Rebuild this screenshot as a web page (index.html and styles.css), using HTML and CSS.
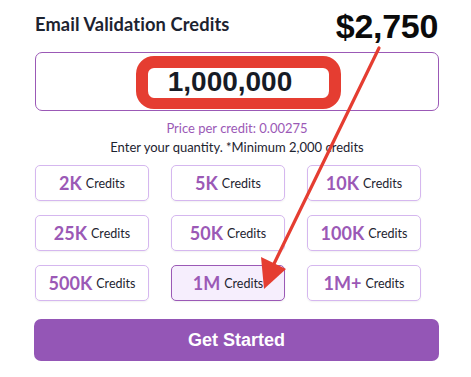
FILE: index.html
```html
<!DOCTYPE html>
<html>
<head>
<meta charset="utf-8">
<link rel="stylesheet" href="styles.css">
</head>
<body>
<div class="page">
  <div class="card">
    <div class="header">
      <h2 class="title">Email Validation Credits</h2>
      <div class="total">$2,750</div>
    </div>
    <div class="qty-box">
      <div class="qty-value">1,000,000</div>
      <div class="qty-highlight"></div>
    </div>
    <p class="ppc">Price per credit: 0.00275</p>
    <p class="hint">Enter your quantity. *Minimum 2,000 credits</p>
    <div class="grid">
      <div class="opt"><span class="amt">2K</span><span class="lbl">Credits</span></div>
      <div class="opt"><span class="amt">5K</span><span class="lbl">Credits</span></div>
      <div class="opt"><span class="amt">10K</span><span class="lbl">Credits</span></div>
      <div class="opt"><span class="amt">25K</span><span class="lbl">Credits</span></div>
      <div class="opt"><span class="amt">50K</span><span class="lbl">Credits</span></div>
      <div class="opt"><span class="amt">100K</span><span class="lbl">Credits</span></div>
      <div class="opt"><span class="amt">500K</span><span class="lbl">Credits</span></div>
      <div class="opt selected"><span class="amt">1M</span><span class="lbl">Credits</span></div>
      <div class="opt"><span class="amt">1M+</span><span class="lbl">Credits</span></div>
    </div>
    <button class="cta">Get Started</button>
  </div>
  <svg class="arrow" width="471" height="377" viewBox="0 0 471 377">
    <line x1="379" y1="48" x2="270" y2="272" stroke="#e53d31" stroke-width="3.2" stroke-linecap="round"/>
    <polygon points="264,289 261,257 286,269" fill="#e53d31"/>
  </svg>
</div>
</body>
</html>
```
FILE: styles.css
```css
html, body {
  margin: 0;
  padding: 0;
  background: #ffffff;
}
.page {
  position: relative;
  width: 471px;
  height: 377px;
  overflow: hidden;
  font-family: "Lato", "Noto Sans", sans-serif;
  color: #1d2330;
}
.card {
  width: 404px;
  padding: 10px 0 0 35px;
}
.header {
  display: flex;
  justify-content: space-between;
  align-items: flex-start;
  height: 42px;
}
.title {
  margin: 3px 0 0 0;
  font-size: 18.3px;
  font-weight: 700;
  color: #1d2330;
  letter-spacing: 0.1px;
}
.total {
  margin: -3px 1px 0 0;
  font-family: "Liberation Sans", Arial, sans-serif;
  font-weight: 700;
  font-size: 34px;
  color: #0b0b0b;
  letter-spacing: -0.3px;
}
.qty-box {
  position: relative;
  box-sizing: border-box;
  height: 59px;
  border: 1px solid #9b59b6;
  border-radius: 7px;
  display: flex;
  justify-content: center;
  align-items: center;
}
.qty-value {
  font-family: "Liberation Sans", Arial, sans-serif;
  font-weight: 700;
  font-size: 28px;
  color: #161b26;
  margin-left: -14px;
}
.qty-highlight {
  position: absolute;
  left: 100px;
  top: 3px;
  width: 181px;
  height: 30px;
  border: 12px solid #e53d31;
  border-top-width: 12px;
  border-bottom-width: 11px;
  border-radius: 18px;
}
.ppc {
  margin: 8px 0 0 0;
  text-align: center;
  font-size: 13px;
  color: #9b59b6;
  line-height: 18px;
}
.hint {
  margin: 1px 0 0 0;
  text-align: center;
  font-size: 13px;
  color: #1d2330;
  line-height: 18px;
}
.grid {
  margin-top: 9px;
  display: grid;
  grid-template-columns: repeat(3, 114px);
  column-gap: 22px;
  row-gap: 14px;
}
.opt {
  box-sizing: border-box;
  height: 36px;
  border: 1px solid #d5b7ef;
  border-radius: 5px;
  display: flex;
  justify-content: center;
  align-items: center;
  gap: 4px;
  box-shadow: 0 1px 2px rgba(0,0,0,0.06);
}
.opt.selected {
  background: #f6eefd;
  border-color: #9b59b6;
}
.amt {
  font-size: 18px;
  font-weight: 700;
  color: #9b59b6;
}
.lbl {
  font-size: 12.5px;
  color: #1d2330;
}
.cta {
  display: block;
  box-sizing: border-box;
  margin: 18px 0 0 -1px;
  width: 405px;
  height: 42px;
  border: none;
  border-radius: 7px;
  background: #9456b6;
  color: #ffffff;
  font-family: "Liberation Sans", Arial, sans-serif;
  font-weight: 700;
  font-size: 18px;
}
.arrow {
  position: absolute;
  left: 0;
  top: 0;
  pointer-events: none;
}
```
